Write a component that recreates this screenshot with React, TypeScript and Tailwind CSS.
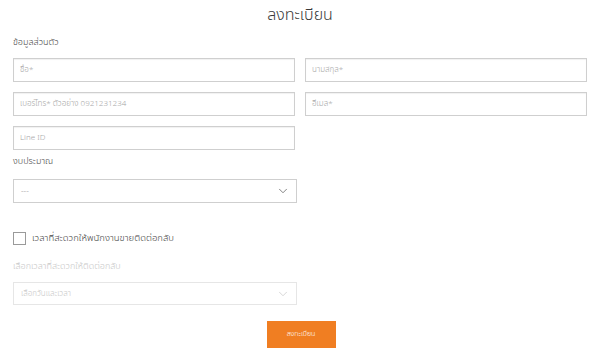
import { ChevronDown } from "lucide-react"

const font = { fontFamily: '"Noto Sans Thai", "Noto Sans", "Liberation Sans", sans-serif' }

function Field({ placeholder }: { placeholder: string }) {
    return (
        <div className="h-6 border border-[#cfcfcf] shadow-[inset_0_1px_1px_rgba(0,0,0,0.06)] flex items-center px-[6px] text-[8px] font-light text-[#a6a6a6]">
            {placeholder}
        </div>
    )
}

export default function App() {
    return (
        <div className="w-[600px] h-[358px] bg-white overflow-hidden" style={font}>
            <div className="h-[30px] flex items-center justify-center text-[16px] text-[#3a3a3a] font-light">
                ลงทะเบียน
            </div>

            <div className="px-[13px] w-[600px]">
                <div className="mt-[6px] h-[14px] flex items-center text-[9px] font-light text-[#444]">ข้อมูลส่วนตัว</div>

                <div className="mt-[8px] grid grid-cols-2 gap-x-[10px] gap-y-[10px] w-[574px]">
                    <Field placeholder="ชื่อ*" />
                    <Field placeholder="นามสกุล*" />
                    <Field placeholder="เบอร์โทร* ตัวอย่าง 0921231234" />
                    <Field placeholder="อีเมล*" />
                    <Field placeholder="Line ID" />
                </div>

                <div className="mt-[5px] h-[14px] flex items-center text-[9px] font-light text-[#444]">งบประมาณ</div>

                <div className="mt-[10px] w-[284px] h-6 border border-[#cfcfcf] flex items-center justify-between pl-[7px] pr-[6px] text-[8px] font-light text-[#888]">
                    <span>---</span>
                    <ChevronDown className="w-[14px] h-[14px] text-[#555]" strokeWidth={1.25} />
                </div>

                <div className="mt-[29px] flex items-center gap-[6px] h-[13px]">
                    <div className="w-[13px] h-[13px] border border-[#9a9a9a] bg-white"></div>
                    <span className="text-[9.5px] font-light text-[#444]">เวลาที่สะดวกให้พนักงานขายติดต่อกลับ</span>
                </div>

                <div className="mt-[15px] h-[14px] flex items-center text-[9px] font-light text-[#c8c8c8]">เลือกเวลาที่สะดวกให้ติดต่อกลับ</div>

                <div className="mt-[8px] w-[284px] h-[23px] border border-[#e6e6e6] flex items-center justify-between pl-[7px] pr-[6px] text-[8px] font-light text-[#c8c8c8]">
                    <span>เลือกวันและเวลา</span>
                    <ChevronDown className="w-[14px] h-[14px] text-[#c8c8c8]" strokeWidth={1.25} />
                </div>

                <div className="mt-[16px] flex justify-center">
                    <button className="ml-[2px] w-[69px] h-[27px] bg-[#f07e22] text-white text-[7px] font-light flex items-center justify-center">
                        ลงทะเบียน
                    </button>
                </div>
            </div>
        </div>
    )
}
